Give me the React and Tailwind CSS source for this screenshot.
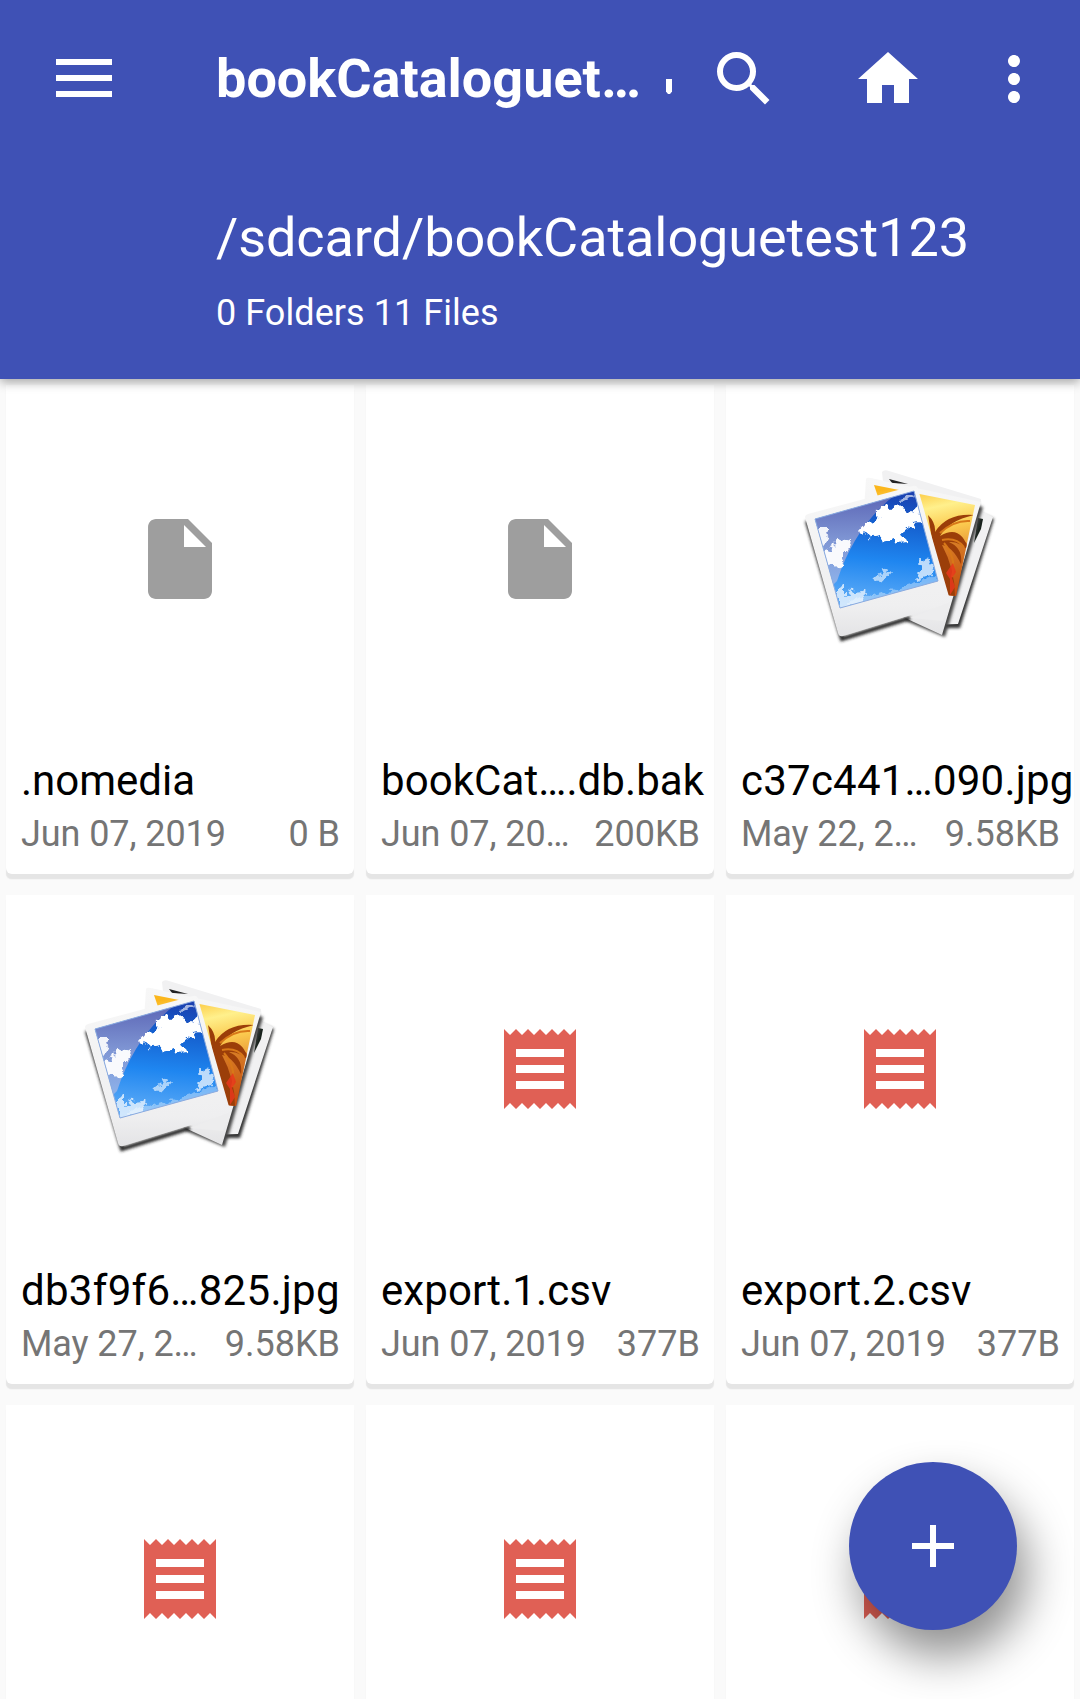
function FileIcon() {
  return (
    <svg viewBox="0 0 24 24" className="size-24 fill-[#9e9e9e]">
      <path d="M6 2c-1.100 0-1.990.9-1.990 2L4 20c0 1.100.89 2 1.990 2H18c1.100 0 2-.9 2-2V8l-6-6H6zm7 7V3.500L18.500 9H13z" />
    </svg>
  );
}

function ReceiptIcon() {
  return (
    <svg viewBox="0 0 24 24" className="size-24 fill-[#e06055]">
      <path d="M18 17H6v-2h12v2zm0-4H6v-2h12v2zm0-4H6V7h12v2zM3 22l1.500-1.500L6 22l1.500-1.500L9 22l1.500-1.500L12 22l1.500-1.500L15 22l1.500-1.500L18 22l1.500-1.500L21 22V2l-1.500 1.500L18 2l-1.500 1.500L15 2l-1.500 1.500L12 2l-1.500 1.500L9 2 7.500 3.500 6 2 4.500 3.500 3 2v20z" />
    </svg>
  );
}

function PhotosIcon() {
  return (
    <svg viewBox="0 0 240 220" className="h-[220px] w-[240px] shrink-0">
      <defs>
        <linearGradient id="sky" x1="0.700" y1="0" x2="0.600" y2="1">
          <stop offset="0" stopColor="#1b3fae" />
          <stop offset="0.280" stopColor="#1560cf" />
          <stop offset="0.600" stopColor="#1f86f0" />
          <stop offset="1" stopColor="#62aef7" />
        </linearGradient>
        <linearGradient id="haze" x1="0" y1="0" x2="0" y2="1">
          <stop offset="0" stopColor="#5a63b4" />
          <stop offset="0.500" stopColor="#7f96d4" />
          <stop offset="1" stopColor="#8fb4ec" />
        </linearGradient>
        <linearGradient id="sunset" x1="0.300" y1="0" x2="0.500" y2="1">
          <stop offset="0" stopColor="#fbb61c" />
          <stop offset="0.250" stopColor="#fff08c" />
          <stop offset="0.450" stopColor="#fbc94e" />
          <stop offset="1" stopColor="#c9480f" />
        </linearGradient>
        <linearGradient id="paper" x1="0" y1="0" x2="0" y2="1">
          <stop offset="0" stopColor="#f7f7f7" />
          <stop offset="0.800" stopColor="#efeff0" />
          <stop offset="1" stopColor="#e4e4e6" />
        </linearGradient>
        <clipPath id="skyClip"><path d="M35 70 134 42 158 132 60 159Z" /></clipPath>
        <clipPath id="sunClip"><path d="M94 36 195 56 176 147 130 142Z" /></clipPath>
        <filter id="soft" x="-20%" y="-20%" width="140%" height="140%"><feGaussianBlur stdDeviation="1.500" /></filter>
        <filter id="cloud" x="-10%" y="-10%" width="120%" height="120%">
          <feTurbulence type="fractalNoise" baseFrequency="0.120" numOctaves="3" seed="4" result="noise" />
          <feDisplacementMap in="SourceGraphic" in2="noise" scale="12" xChannelSelector="R" yChannelSelector="G" />
          <feGaussianBlur stdDeviation="0.700" />
        </filter>
      </defs>
      <path d="M110 26 214 70 180 179 150 179 118 160Z" fill="#333" filter="url(#soft)" />
      <path d="M102 23q2-3 7-1L201 50 202 62 213 68 178 175 150 176 110 100Z" fill="#f1f1f2" />
      <path d="M109 30 128 35 112 34Z" fill="#222" />
      <path d="M198 69 203 70 201 80 194 94Z" fill="#18221d" />
      <path d="M90 32 203 58 165 188 126 172Z" fill="#444" filter="url(#soft)" />
      <path d="M86 30q1-2 4-1L201 53 162 186 125 169 80 120Z" fill="url(#paper)" />
      <path d="M94 36 195 56 176 147 130 142Z" fill="url(#sunset)" />
      <g clipPath="url(#sunClip)">
        <path d="M146 96q28-12 44 0l-14 52-34-2Z" fill="#c55a12" opacity=".55" />
        <path d="M148 66q8 8 7 17 12-19 39-17-26 6-34 21 21-13 29 15-10-10-20-9 14 6 12 22-9-18-19-19 13 24 13 52h-24q12-24 1-58Z" fill="#9b3e09" />
        <path d="M160 84q14-13 30-12M162 91q14-3 22 7M164 94q13 15 8 34" fill="none" stroke="#d87818" strokeWidth="2" />
        <path d="m173 114 3 9-4 6 3 9-5 8 0-16-4-6Z" fill="#e8371c" opacity=".85" />
      </g>
      <path d="m27 72 35 118 68-21" fill="none" stroke="#222" strokeWidth="4" filter="url(#soft)" />
      <path d="M25 68q0-2 3-3L133 37q4-1 5 3L170 151q0 3-3 4L63 187q-4 1-5-3Z" fill="url(#paper)" />
      <path d="M130 169 170 153 163 172Z" fill="#ededee" />
      <path d="m35 70 99-28 24 90-98 27Z" fill="url(#sky)" />
      <g clipPath="url(#skyClip)">
        <path d="m32 68 87-25Q76 74 57 132l-8 8Z" fill="url(#haze)" />
        <g fill="#fff" filter="url(#cloud)">
          <path d="m79 82 7-8 12-3 1-11 7-3 5 2 5-4 5 5 6 1 2 4 8-6 6 7-1 7-8 1 2 7-11-2-2 5 4 8-7 1-3 4-5-6-8 2-3-7-6 1-6 4-3-6Z" />
          <path d="m42 104 9-3 6-12 14 3-2 9-6 6-3 12-8-5-8 2Z" opacity=".95" />
          <path d="m36 80 12 0-4 6 5 4-5 6-4 6Z" opacity=".9" />
          <path d="m140 109 6 4 2-4 4 8 2 10-8 1-8 3-3-4 6-7Z" opacity=".7" />
          <path d="m58 136 6 1 0 10 8-5 10-1 4 5-4 7-24 9Z" opacity=".7" />
          <path d="m95 127 5-3 5-3 5 3-4 5-8 4Z" opacity=".6" />
          <path d="m120 49 9-3 4 2-6 4-6 1Z" opacity=".6" />
          <path d="m64 156 15-8 10 1 66-21 6 5-98 30Z" opacity=".35" />
        </g>
      </g>
      <path d="m35 70 99-28 24 90-98 27Z" fill="none" stroke="#8cabdf" strokeWidth="1" />
    </svg>
  );
}

const icons = { file: FileIcon, photo: PhotosIcon, csv: ReceiptIcon };

const files = [
  { name: ".nomedia", date: "Jun 07, 2019", size: "0 B", kind: "file", tracking: "tracking-[0px]" },
  { name: "bookCat….db.bak", date: "Jun 07, 20…", size: "200KB", kind: "file", tracking: "tracking-[0.080px]" },
  { name: "c37c441…090.jpg", date: "May 22, 2…", size: "9.58KB", kind: "photo", tracking: "tracking-[0.230px]" },
  { name: "db3f9f6…825.jpg", date: "May 27, 2…", size: "9.58KB", kind: "photo", tracking: "tracking-[0.290px]" },
  { name: "export.1.csv", date: "Jun 07, 2019", size: "377B", kind: "csv", tracking: "tracking-[0.090px]" },
  { name: "export.2.csv", date: "Jun 07, 2019", size: "377B", kind: "csv", tracking: "tracking-[0.090px]" },
  { kind: "csv" },
  { kind: "csv" },
  { kind: "csv" },
];

function FileCard({ file }) {
  const Icon = icons[file.kind];
  return (
    <div className="flex h-[489px] flex-col rounded-b-[6px] bg-white shadow-[0_5px_1px_-0.5px_#e5e5e5,0_6px_2px_-1px_#eeeeee]">
      <div className="flex h-[348px] shrink-0 items-center justify-center">
        <Icon />
      </div>
      {file.name && (
        <div className="px-[15px] pt-[23px]">
          <div className={`h-[50px] text-[42px] leading-[50px] whitespace-nowrap text-black ${file.tracking}`}>{file.name}</div>
          <div className="mt-[7px] flex justify-between text-[36px] leading-[42px] whitespace-nowrap text-[#757575]">
            <span className="tracking-[-0.090px]">{file.date}</span>
            <span className="-mr-[1px]">{file.size}</span>
          </div>
        </div>
      )}
    </div>
  );
}

export default function App() {
  return (
    <div className="relative flex h-[1699px] w-[1080px] flex-col overflow-hidden bg-[#fafafa] font-['Roboto',sans-serif]">
      <header className="relative z-10 h-[379px] shrink-0 bg-[#3f51b5] text-white shadow-[0_3px_10px_rgba(0,0,0,0.35)]">
        <div className="flex h-[158px] items-center">
          <div className="mb-[2px] ml-[56px] flex w-[56px] shrink-0 flex-col gap-[10px]">
            <span className="h-[6px] bg-white" />
            <span className="h-[6px] bg-white" />
            <span className="h-[6px] bg-white" />
          </div>
          <h1 className="ml-[104px] w-[440px] shrink-0 text-[54px] leading-[64px] font-bold whitespace-nowrap">bookCataloguet…</h1>
          <svg viewBox="0 0 6 15" className="mt-[15px] ml-[10px] h-[15px] w-[6px] shrink-0 fill-white">
            <path d="M0 0h6v12.500L4 15H2L0 12.500Z" />
          </svg>
          <svg viewBox="0 0 24 24" className="ml-[36px] size-[72px] shrink-0 fill-white">
            <path d="M15.500 14h-.79l-.28-.27A6.471 6.471 0 0 0 16 9.500 6.500 6.500 0 1 0 9.500 16c1.610 0 3.090-.59 4.230-1.570l.27.28v.79l5 4.990L20.490 19l-4.990-5zm-6 0C7.010 14 5 11.990 5 9.500S7.010 5 9.500 5 14 7.010 14 9.500 11.990 14 9.500 14z" />
          </svg>
          <svg viewBox="0 0 24 24" className="ml-[72px] size-[72px] shrink-0 fill-white">
            <path d="M10 20v-6h4v6h5v-8h3L12 3 2 12h3v8z" />
          </svg>
          <svg viewBox="0 0 24 24" className="ml-[54px] size-[72px] shrink-0 fill-white">
            <path d="M12 8c1.100 0 2-.9 2-2s-.9-2-2-2-2 .9-2 2 .9 2 2 2zm0 2c-1.100 0-2 .9-2 2s.9 2 2 2 2-.9 2-2-.9-2-2-2zm0 6c-1.100 0-2 .9-2 2s.9 2 2 2 2-.9 2-2-.9-2-2-2z" />
          </svg>
        </div>
        <div className="pt-[48px] pl-[216px]">
          <div className="text-[54px] leading-[64px] tracking-[-0.080px] whitespace-nowrap">/sdcard/bookCataloguetest123</div>
          <div className="mt-[22px] text-[36px] leading-[42px] tracking-[0.060px] whitespace-nowrap">0 Folders 11 Files</div>
        </div>
      </header>
      <main className="mt-[6px] grid grid-cols-3 gap-x-[12px] gap-y-[21px] px-[6px]">
        {files.map((file, i) => (
          <FileCard key={i} file={file} />
        ))}
      </main>
      <button
        aria-label="Add"
        className="absolute top-[1462px] left-[849px] z-20 flex size-[168px] items-center justify-center rounded-full bg-[#3f51b5] shadow-[10px_26px_46px_rgba(0,0,0,0.44)]"
      >
        <svg viewBox="0 0 24 24" className="size-[72px] fill-white">
          <path d="M19 13h-6v6h-2v-6H5v-2h6V5h2v6h6v2z" />
        </svg>
      </button>
    </div>
  );
}
